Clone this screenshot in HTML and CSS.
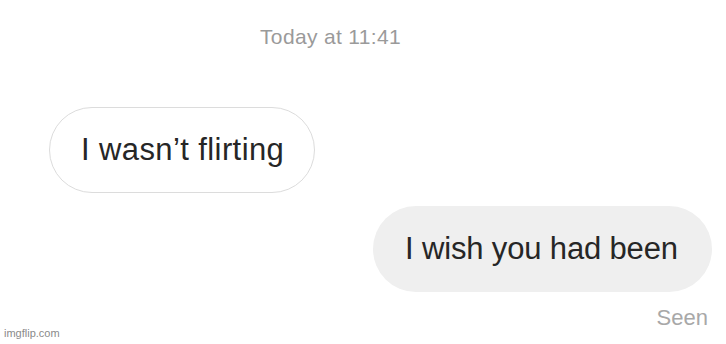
FILE: index.html
```html
<!DOCTYPE html>
<html lang="en">
<head>
  <meta charset="UTF-8">
  <title>Chat</title>
  <link rel="stylesheet" href="styles.css">
</head>
<body>
  <div class="chat">
    <div class="stamp">Today at 11:41</div>
    <div class="bubble bubble-in">I wasn’t flirting</div>
    <div class="bubble bubble-out">I wish you had been</div>
    <div class="seen">Seen</div>
  </div>
  <div class="watermark">imgflip.com</div>
</body>
</html>
```

FILE: styles.css
```css
/* Plain white chat screen */
body {
  margin: 0;
  padding: 0;
  width: 726px;
  height: 344px;
  background: #ffffff;
  font-family: "Liberation Sans", Arial, sans-serif;
  position: relative;
  overflow: hidden;
}

.chat {
  display: flex;
  flex-direction: column;
  padding-top: 24px;
}

.stamp {
  padding-left: 260px;
  font-size: 21px;
  line-height: 26px;
  letter-spacing: 0.35px;
  color: #9a9a9a;
}

.bubble {
  height: 86px;
  border-radius: 43px;
  box-sizing: border-box;
  display: flex;
  align-items: center;
  font-size: 31px;
  color: #262626;
}

.bubble-in {
  align-self: flex-start;
  margin-left: 49px;
  margin-top: 57px;
  width: 266px;
  padding-left: 31px;
  letter-spacing: 0.4px;
  border: 1.5px solid #dcdcdc;
}

.bubble-out {
  align-self: flex-end;
  margin-right: 14px;
  margin-top: 13px;
  width: 339px;
  padding-left: 32px;
  letter-spacing: -0.15px;
  background: #efefef;
}

.seen {
  align-self: flex-end;
  margin-right: 18px;
  margin-top: 13px;
  font-size: 22px;
  color: #a8a8a8;
}

/* meme site watermark in the corner */
.watermark {
  position: absolute;
  left: 4px;
  bottom: 5px;
  font-size: 11px;
  color: #8a8a8a;
}
```
